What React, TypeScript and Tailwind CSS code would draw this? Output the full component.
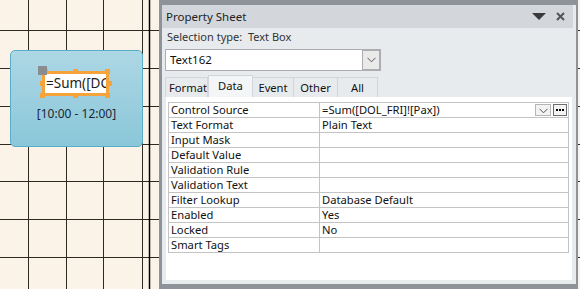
import React from "react";

const font = { fontFamily: '"Noto Sans", "Open Sans", sans-serif' };

const rows: [string, string][] = [
  ["Control Source", "=Sum([DOL_FRI]![Pax])"],
  ["Text Format", "Plain Text"],
  ["Input Mask", ""],
  ["Default Value", ""],
  ["Validation Rule", ""],
  ["Validation Text", ""],
  ["Filter Lookup", "Database Default"],
  ["Enabled", "Yes"],
  ["Locked", "No"],
  ["Smart Tags", ""],
];

function Chevron() {
  return (
    <svg width="9" height="6" viewBox="0 0 9 6">
      <path d="M0.5 0.8 L4.5 4.8 L8.5 0.8" fill="none" stroke="#555" strokeWidth="1" />
    </svg>
  );
}

function Canvas() {
  const vx = [28, 66, 103, 142];
  const hy = [30, 68, 106, 144, 181, 219, 257];
  return (
    <svg className="absolute inset-0" width="580" height="289" viewBox="0 0 580 289">
      <rect width="580" height="289" fill="#FBF3E8" />
      {vx.map((x) => (
        <line key={x} x1={x + 0.5} y1="0" x2={x + 0.5} y2="289" stroke="#2E2923" strokeWidth="1" />
      ))}
      {hy.map((y) => (
        <line key={y} x1="0" y1={y + 0.5} x2="580" y2={y + 0.5} stroke="#2E2923" strokeWidth="1" />
      ))}
      <line x1="149.5" y1="0" x2="149.5" y2="289" stroke="#000" strokeWidth="1.5" />
    </svg>
  );
}

function Handle({ className }: { className: string }) {
  return <div className={`absolute w-[5px] h-[5px] bg-[#F6A33C] ${className}`} />;
}

export default function App() {
  return (
    <div className="relative w-[580px] h-[289px] overflow-hidden" style={font}>
      <Canvas />

      {/* form control on design canvas */}
      <div className="absolute left-[10px] top-[50px] w-[133px] h-[97px] rounded-[5px] border border-[#5AADC9] bg-gradient-to-b from-[#ADD7E5] to-[#8AC7D9]">
        <div className="absolute left-[31px] top-[20px] w-[67px] h-[25px] border-[3px] border-[#F6A33C] bg-white overflow-hidden">
          <div className="pl-[1px] text-[13.5px] leading-[19px] text-[#222] whitespace-nowrap">=Sum([DC</div>
        </div>
        <Handle className="left-[32px] top-[18px]" />
        <Handle className="left-[62px] top-[18px]" />
        <Handle className="left-[94px] top-[18px]" />
        <Handle className="left-[29px] top-[30px]" />
        <Handle className="left-[96px] top-[30px]" />
        <Handle className="left-[29px] top-[42px]" />
        <Handle className="left-[62px] top-[42px]" />
        <Handle className="left-[94px] top-[42px]" />
        <div className="absolute left-[27px] top-[15px] w-[9px] h-[9px] bg-[#8A8C90]" />
        <div className="absolute left-0 right-0 top-[54px] text-center text-[12px] leading-[18px] text-[#1B2735]">
          [10:00 - 12:00]
        </div>
      </div>

      {/* Property sheet window */}
      <div className="absolute left-[159px] top-0 w-[419px] h-[289px] bg-[#8E9399] pt-[5px] pl-[3px] pr-[2px] pb-[5px]">
        <div className="flex flex-col h-full bg-[#E8EBEE]">
          <div className="h-[23px] mr-[3px] bg-[#D3D7DC] flex items-center pl-[4px] pr-[8px]">
            <span className="text-[11.5px] text-[#222] leading-[16px]">Property Sheet</span>
            <div className="flex-1" />
            <svg width="14" height="8" viewBox="0 0 14 8" className="mr-[10px]">
              <path d="M0 0 L14 0 L7 7 Z" fill="#3A3A3A" />
            </svg>
            <svg width="9" height="9" viewBox="0 0 9 9">
              <path d="M1 1 L8 8 M8 1 L1 8" stroke="#555" strokeWidth="2" />
            </svg>
          </div>
          <div className="h-[17px] pl-[5px] text-[11px] leading-[17px] text-[#333] whitespace-pre">
            Selection type:  Text Box
          </div>
          <div className="mt-[4px] ml-[3px] w-[216px] h-[22px] bg-white border border-[#ABADB3] flex items-center">
            <span className="pl-[4px] text-[11.5px] text-[#111] flex-1">Text162</span>
            <div className="w-[18px] h-[20px] border border-[#ADADAD] bg-[#EAEAEA] flex items-center justify-center">
              <Chevron />
            </div>
          </div>
          <div className="mt-[4px] ml-[3px] h-[22px] flex items-end text-[11.2px] text-[#111]">
            <div className="w-[43px] h-[20px] border border-b-0 border-[#D2D5D9] leading-[20px] pl-[3px] whitespace-nowrap">Format</div>
            <div className="w-[45px] h-[22px] bg-[#F4F5F6] border border-b-0 border-[#D2D5D9] leading-[19px] text-center">Data</div>
            <div className="w-[41px] h-[20px] border border-b-0 border-l-0 border-[#D2D5D9] leading-[20px] text-center">Event</div>
            <div className="w-[44px] h-[20px] border border-b-0 border-l-0 border-[#D2D5D9] leading-[20px] text-center">Other</div>
            <div className="w-[40px] h-[20px] border border-b-0 border-l-0 border-[#D2D5D9] leading-[20px] text-center">All</div>
          </div>
          <div className="flex-1 mx-[4px] mb-[4px] bg-white pt-[5px] pl-[2px] pr-[3px]">
            <div className="border-t border-l border-r border-[#C4C4C4]">
              {rows.map(([k, v], i) => (
                <div key={k} className="flex h-[15px] border-b border-[#C4C4C4] text-[11.2px] leading-[14px] text-[#111]">
                  <div className="w-[151px] pl-[2px] border-r border-[#C4C4C4] whitespace-nowrap">{k}</div>
                  <div className="flex-1 pl-[2px] flex items-start whitespace-nowrap">
                    <span className="flex-1">{v}</span>
                    {i === 0 && (
                      <div className="flex gap-[2px] pt-[1px] pr-[1px]">
                        <div className="w-[16px] h-[12px] border border-[#B5B5B5] bg-[#F2F2F2] flex items-end justify-center pb-[1px]">
                          <Chevron />
                        </div>
                        <div className="w-[14px] h-[12px] border border-[#6E6E6E] bg-[#F4F4F4] flex items-center justify-center gap-[1px]">
                          <div className="w-[2px] h-[2px] bg-black" />
                          <div className="w-[2px] h-[2px] bg-black" />
                          <div className="w-[2px] h-[2px] bg-black" />
                        </div>
                      </div>
                    )}
                  </div>
                </div>
              ))}
            </div>
          </div>
        </div>
      </div>
    </div>
  );
}
